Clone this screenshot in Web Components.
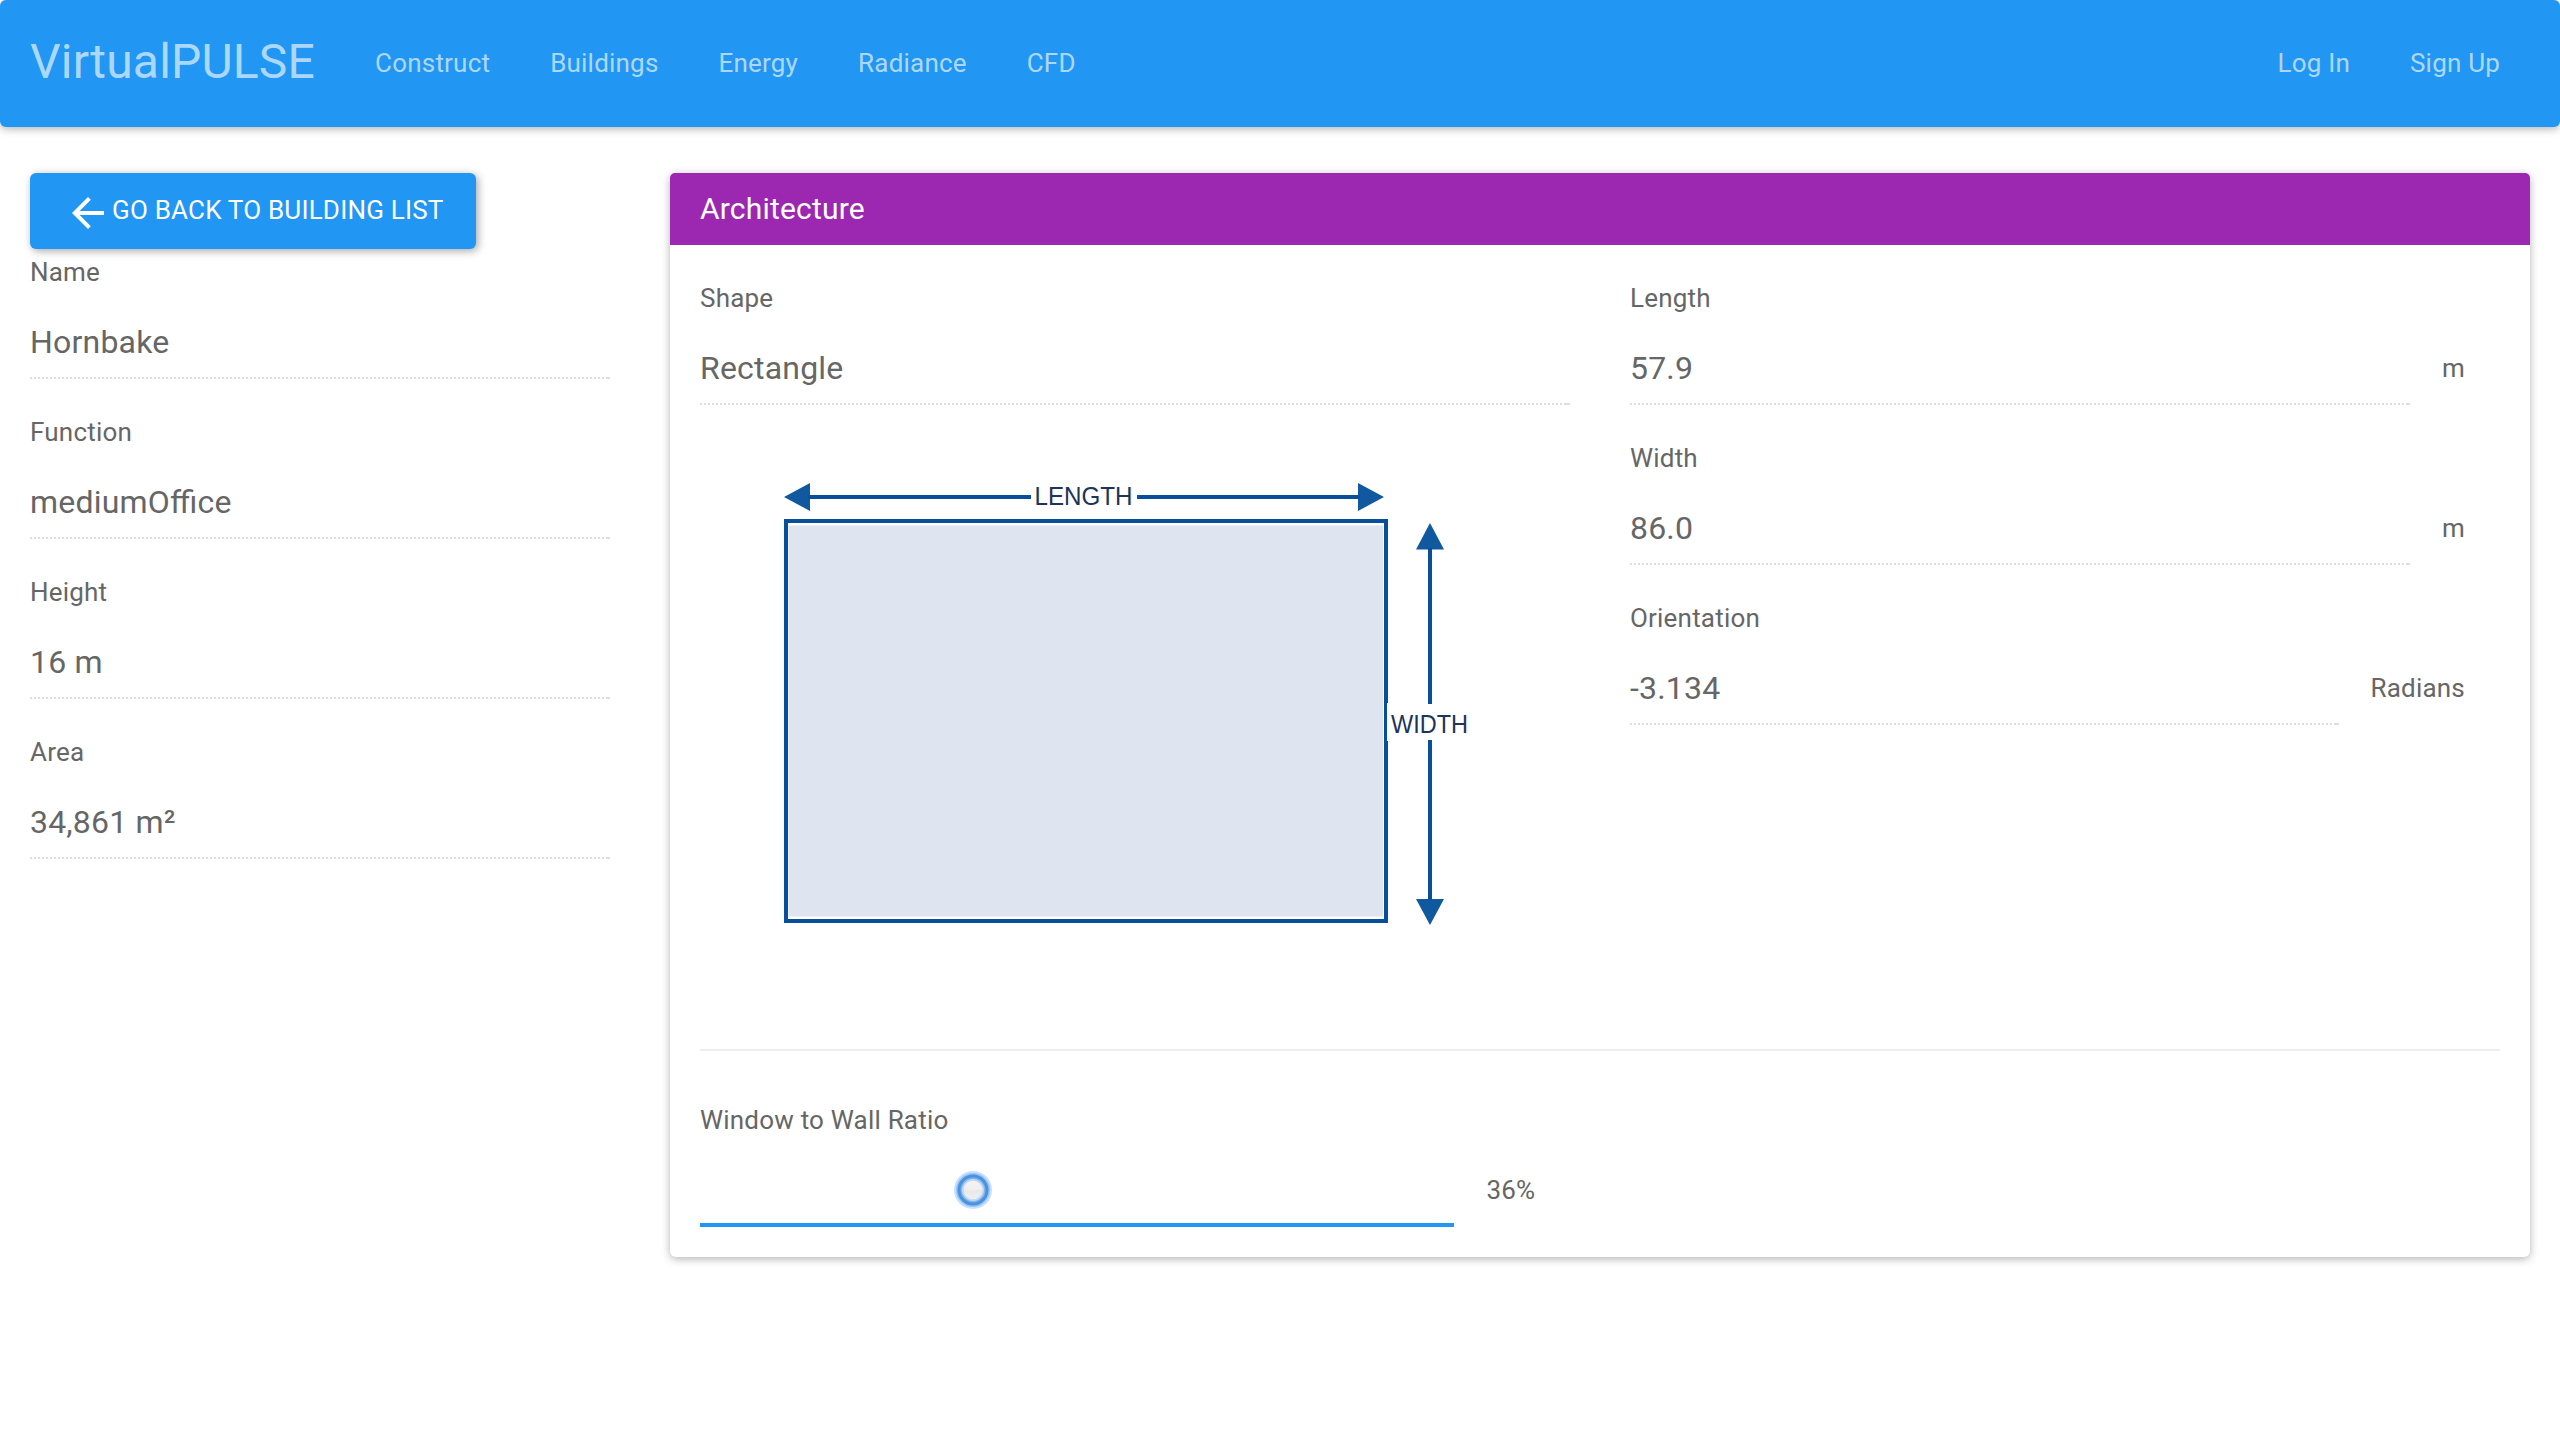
<!DOCTYPE html>
<html lang="en">
<head>
<meta charset="utf-8">
<title>VirtualPULSE</title>
<style>
html,body{margin:0;background:#fff}
body{font-family:Roboto,"Liberation Sans",sans-serif;font-size:26px;line-height:39px;letter-spacing:.2px;color:#666;min-height:1455px}
.layout{display:grid;grid-template-columns:580px 1860px;gap:60px;padding:46px 30px 0;align-items:start}
.cols{display:grid;grid-template-columns:870px 870px;gap:60px;padding:33px 30px 0}
.side{display:flex;flex-direction:column;align-items:flex-start}
.side vp-field{width:580px}
</style>
</head>
<body>
<vp-navbar>
  <vp-link>Construct</vp-link><vp-link>Buildings</vp-link><vp-link>Energy</vp-link><vp-link>Radiance</vp-link><vp-link>CFD</vp-link>
  <vp-link slot="end">Log In</vp-link><vp-link slot="end">Sign Up</vp-link>
</vp-navbar>
<div class="layout">
  <div class="side">
    <vp-back-button>Go back to building list</vp-back-button>
    <vp-field label="Name">Hornbake</vp-field>
    <vp-field label="Function">mediumOffice</vp-field>
    <vp-field label="Height">16 m</vp-field>
    <vp-field label="Area">34,861 m²</vp-field>
  </div>
  <vp-card>
    <span slot="title">Architecture</span>
    <div class="cols">
      <div>
        <vp-field label="Shape">Rectangle</vp-field>
        <vp-diagram></vp-diagram>
      </div>
      <div>
        <vp-field label="Length" unit="m">57.9</vp-field>
        <vp-field label="Width" unit="m">86.0</vp-field>
        <vp-field label="Orientation" unit="Radians">-3.134</vp-field>
      </div>
    </div>
    <vp-slider label="Window to Wall Ratio" value="36"></vp-slider>
  </vp-card>
</div>
<script>
class Base extends HTMLElement{
  connectedCallback(){
    if(!this.shadowRoot) this.attachShadow({mode:'open'}).innerHTML=this.view();
  }
}
customElements.define('vp-navbar',class extends Base{view(){return `<style>
:host{display:flex;align-items:center;height:127px;box-sizing:border-box;padding:0 30px;background:#2196f3;border-radius:6px;box-shadow:0 2px 8px rgba(0,0,0,.3);color:rgba(255,255,255,.65)}
.brand{font-size:48px;line-height:72px;margin-right:30px;padding-bottom:3px}
nav{display:flex;padding-bottom:1px}.end{margin-left:auto}
</style><div class="brand">VirtualPULSE</div><nav><slot></slot></nav><nav class="end"><slot name="end"></slot></nav>`}});
customElements.define('vp-link',class extends Base{view(){return `<style>:host{display:block;padding:0 30px}</style><slot></slot>`}});
customElements.define('vp-back-button',class extends Base{view(){return `<style>
:host{display:flex;align-items:center;box-sizing:border-box;height:76px;width:446px;padding:0 0 2px 34px;margin-bottom:3px;border-radius:6px;background:#2196f3;color:#fff;text-transform:uppercase;white-space:nowrap;box-shadow:2px 2px 8px rgba(0,0,0,.35)}
svg{width:48px;height:48px;flex:none;margin-top:6px}
</style><svg viewBox="0 0 24 24"><path fill="#fff" d="M20 11H7.83l5.59-5.59L12 4l-8 8 8 8 1.41-1.41L7.83 13H20v-2z"/></svg><span><slot></slot></span>`}});
customElements.define('vp-field',class extends Base{view(){const u=this.getAttribute('unit');return `<style>
:host{display:block;height:160px}
.label{padding-top:1px}
.row{display:flex;height:73px;margin-top:14px;align-items:center}
.value{flex:1;height:73px;box-sizing:border-box;font-size:32px;line-height:48px;padding-top:12px;letter-spacing:.2px;font-feature-settings:"liga" 1;
background:linear-gradient(#ddd,#ddd) right bottom/4px 2px no-repeat,repeating-linear-gradient(90deg,#ddd 0 2px,transparent 2px 4px) bottom/100% 2px no-repeat}
.unit{padding:0 35px 1px 32px}
</style><div class="label">${this.getAttribute('label')}</div><div class="row"><div class="value"><slot></slot></div>${u?`<div class="unit">${u}</div>`:''}</div>`}});
customElements.define('vp-card',class extends Base{view(){return `<style>
:host{display:block;height:1084px;border-radius:6px;background:#fff;box-shadow:0 2px 8px rgba(0,0,0,.3)}
header{height:72px;box-sizing:border-box;padding:13px 30px 0;background:#9c27b0;color:#fff;font-size:30px;line-height:45px;border-radius:5px 5px 0 0}
</style><header><slot name="title"></slot></header><slot></slot>`}});
customElements.define('vp-diagram',class extends Base{view(){return `<style>
:host{display:block;height:611px}svg{display:block}text{font:25px "Liberation Sans",Arial,sans-serif;letter-spacing:0;fill:#1d3557}
</style><svg width="870" height="550" viewBox="700 438 870 550">
<rect x="786" y="521" width="600" height="400" fill="#fff" stroke="#074f9a" stroke-width="4"/>
<rect x="788.5" y="525.5" width="594.5" height="391" fill="#dee5f0"/>
<g fill="#11599f"><path d="M784 497l26-14v28zM1384 497l-26-14v28zM1430 523l-14 26.5h28zM1430 925l-14-26h28z"/></g>
<path stroke="#074f9a" stroke-width="4" d="M808 497H1031M1137 497H1360M1430 548V704M1430 740V900"/>
<path fill="#fff" d="M1387 703h20v38h-20z"/>
<text x="1034.5" y="505" textLength="98" lengthAdjust="spacingAndGlyphs">LENGTH</text>
<text x="1391" y="733" textLength="77" lengthAdjust="spacingAndGlyphs">WIDTH</text>
</svg>`}});
customElements.define('vp-slider',class extends Base{view(){const v=this.getAttribute('value');return `<style>
:host{display:block;margin:0 30px}
hr{border:0;height:2px;margin:0 0 50px;background:#ededed}
.row{display:flex;align-items:center;margin-top:14px}
.track{position:relative;width:754px;height:73px;box-sizing:border-box;border-bottom:4px solid #2196f3}
.thumb{position:absolute;left:${v}%;margin-left:-17px;top:17px;width:38px;height:38px}
.val{padding:0 0 1px 32.5px}
</style><hr><div class="label">${this.getAttribute('label')}</div><div class="row"><div class="track"><svg class="thumb" viewBox="0 0 38 38">
<defs><linearGradient id="g" x2="0" y2="1"><stop offset="0" stop-color="#f5f5f5"/><stop offset=".5" stop-color="#eee"/><stop offset=".52" stop-color="#e8e8e8"/><stop offset="1" stop-color="#efefef"/></linearGradient></defs>
<circle cx="19" cy="19" r="19" fill="#c7e0fc"/><circle cx="19" cy="19" r="17" fill="#94c4f7"/><circle cx="19" cy="19" r="15.5" fill="#4b92df"/><circle cx="19" cy="19" r="12.5" fill="#82b4ea"/><circle cx="19" cy="19" r="11" fill="#c2d9f2"/><circle cx="19" cy="19" r="9.3" fill="url(#g)"/></svg></div><div class="val">${v}%</div></div>`}});
</script>
</body>
</html>
